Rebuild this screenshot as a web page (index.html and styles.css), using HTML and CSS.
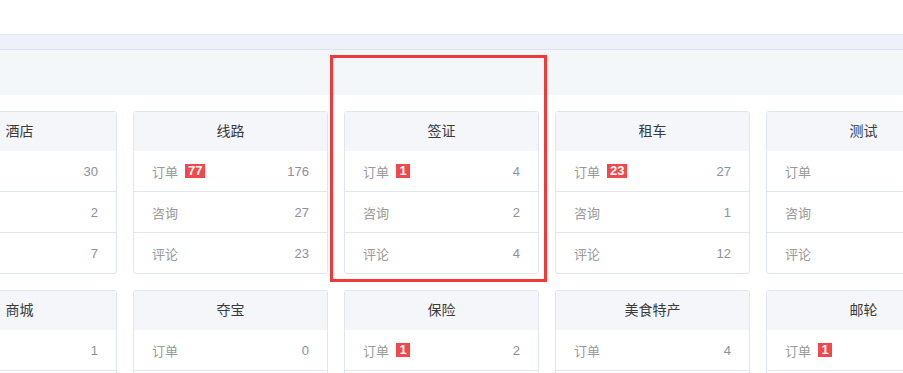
FILE: index.html
```html
<!DOCTYPE html>
<html lang="zh-CN">
<head>
    <meta charset="UTF-8">
    <meta name="viewport" content="width=device-width, initial-scale=1.0">
    <title>统计面板</title>
    <link rel="stylesheet" href="styles.css">
</head>
<body>
    <div class="top-bar"></div>
    <div class="tab-strip"></div>
    <div class="toolbar"></div>

    <div class="board">
        <div class="card-row">
            <div class="card">
                <div class="card-header">酒店</div>
                <div class="card-item"><span class="label">订单</span><span class="num">30</span></div>
                <div class="card-item"><span class="label">咨询</span><span class="num">2</span></div>
                <div class="card-item"><span class="label">评论</span><span class="num">7</span></div>
            </div>
            <div class="card">
                <div class="card-header">线路</div>
                <div class="card-item"><span class="label">订单<em class="badge">77</em></span><span class="num">176</span></div>
                <div class="card-item"><span class="label">咨询</span><span class="num">27</span></div>
                <div class="card-item"><span class="label">评论</span><span class="num">23</span></div>
            </div>
            <div class="card">
                <div class="card-header">签证</div>
                <div class="card-item"><span class="label">订单<em class="badge">1</em></span><span class="num">4</span></div>
                <div class="card-item"><span class="label">咨询</span><span class="num">2</span></div>
                <div class="card-item"><span class="label">评论</span><span class="num">4</span></div>
            </div>
            <div class="card">
                <div class="card-header">租车</div>
                <div class="card-item"><span class="label">订单<em class="badge">23</em></span><span class="num">27</span></div>
                <div class="card-item"><span class="label">咨询</span><span class="num">1</span></div>
                <div class="card-item"><span class="label">评论</span><span class="num">12</span></div>
            </div>
            <div class="card">
                <div class="card-header">测试</div>
                <div class="card-item"><span class="label">订单</span><span class="num">0</span></div>
                <div class="card-item"><span class="label">咨询</span><span class="num">0</span></div>
                <div class="card-item"><span class="label">评论</span><span class="num">0</span></div>
            </div>
        </div>

        <div class="card-row">
            <div class="card">
                <div class="card-header">商城</div>
                <div class="card-item"><span class="label">订单</span><span class="num">1</span></div>
                <div class="card-item"><span class="label">咨询</span><span class="num">0</span></div>
                <div class="card-item"><span class="label">评论</span><span class="num">0</span></div>
            </div>
            <div class="card">
                <div class="card-header">夺宝</div>
                <div class="card-item"><span class="label">订单</span><span class="num">0</span></div>
                <div class="card-item"><span class="label">咨询</span><span class="num">0</span></div>
                <div class="card-item"><span class="label">评论</span><span class="num">0</span></div>
            </div>
            <div class="card">
                <div class="card-header">保险</div>
                <div class="card-item"><span class="label">订单<em class="badge">1</em></span><span class="num">2</span></div>
                <div class="card-item"><span class="label">咨询</span><span class="num">0</span></div>
                <div class="card-item"><span class="label">评论</span><span class="num">0</span></div>
            </div>
            <div class="card">
                <div class="card-header">美食特产</div>
                <div class="card-item"><span class="label">订单</span><span class="num">4</span></div>
                <div class="card-item"><span class="label">咨询</span><span class="num">0</span></div>
                <div class="card-item"><span class="label">评论</span><span class="num">0</span></div>
            </div>
            <div class="card">
                <div class="card-header">邮轮</div>
                <div class="card-item"><span class="label">订单<em class="badge">1</em></span><span class="num">3</span></div>
                <div class="card-item"><span class="label">咨询</span><span class="num">0</span></div>
                <div class="card-item"><span class="label">评论</span><span class="num">0</span></div>
            </div>
        </div>
    </div>

    <!-- highlight frame drawn over the page -->
    <div class="highlight"></div>
</body>
</html>
```

FILE: styles.css
```css
body {
    margin: 0;
    padding: 0;
    background: #fff;
    font-family: "Liberation Sans", "Noto Sans CJK SC", sans-serif;
    color: #333;
    overflow: hidden;
    position: relative;
}

.top-bar {
    height: 34px;
    background: #fff;
}

.tab-strip {
    height: 14px;
    background: #eef1f9;
    border-top: 1px solid #dfe5f1;
    border-bottom: 1px solid #dde2ef;
}

.toolbar {
    height: 45px;
    background: #f4f7fa;
}

.board {
    padding-top: 16px;
    margin-left: -78px;
    display: flex;
    flex-direction: column;
    gap: 16px;
}

.card-row {
    display: flex;
    gap: 16px;
}

.card {
    flex: 0 0 195px;
    box-sizing: border-box;
    border: 1px solid #dfe5f1;
    border-radius: 3px;
    background: #fff;
    overflow: hidden;
}

.card-header {
    height: 39px;
    line-height: 39px;
    text-align: center;
    background: #f5f6fa;
    font-size: 14px;
    color: #3a3a3a;
}

.card-item {
    height: 40px;
    padding: 0 18px;
    display: flex;
    align-items: center;
    justify-content: space-between;
    font-size: 13px;
}

.card-item + .card-item {
    border-top: 1px solid #e1e7f2;
}

.label {
    color: #999;
    display: flex;
    align-items: center;
}

.badge {
    font-style: normal;
    margin-left: 7px;
    background: #f2474b;
    color: #fff;
    font-size: 13px;
    font-weight: bold;
    line-height: 14px;
    padding: 0 3px;
    min-width: 8px;
    text-align: center;
}

.num {
    color: #8b909e;
    font-size: 13px;
}

.highlight {
    position: absolute;
    left: 330px;
    top: 55px;
    width: 217px;
    height: 227px;
    box-sizing: border-box;
    border: 3px solid #f03a3a;
}
```
